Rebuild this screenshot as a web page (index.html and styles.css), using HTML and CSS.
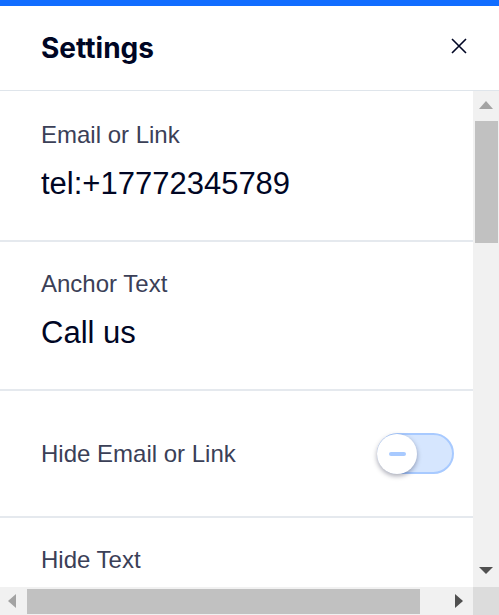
FILE: index.html
```html
<!DOCTYPE html>
<html lang="en">
<head>
  <meta charset="UTF-8" />
  <meta name="viewport" content="width=device-width, initial-scale=1" />
  <title>Settings</title>
  <link rel="stylesheet" href="styles.css">
</head>
<body>
  <div class="top-bar"></div>

  <header class="panel-header">
    <h1 class="panel-title">Settings</h1>
    <button class="close-btn" aria-label="Close">
      <svg width="16" height="16" viewBox="0 0 16 16" aria-hidden="true">
        <path d="M1 1 L15 15 M15 1 L1 15" stroke="#000624" stroke-width="1.6" fill="none" />
      </svg>
    </button>
  </header>

  <div class="panel-body">
    <div class="content">
      <section class="field">
        <div class="field-label">Email or Link</div>
        <div class="field-value">tel:+17772345789</div>
      </section>

      <section class="field">
        <div class="field-label">Anchor Text</div>
        <div class="field-value">Call us</div>
      </section>

      <section class="field field-toggle">
        <div class="field-label">Hide Email or Link</div>
        <span class="toggle" role="switch" aria-checked="false" aria-disabled="true">
          <span class="knob"><span class="knob-mark"></span></span>
        </span>
      </section>

      <section class="field">
        <div class="field-label">Hide Text</div>
      </section>
    </div>

    <div class="vscroll">
      <div class="sb-btn"><span class="arrow up off"></span></div>
      <div class="sb-track"><div class="vthumb"></div></div>
      <div class="sb-btn"><span class="arrow down"></span></div>
    </div>

    <div class="hscroll">
      <div class="sb-btn h"><span class="arrow left off"></span></div>
      <div class="sb-track h"><div class="hthumb"></div></div>
      <div class="sb-btn h"><span class="arrow right"></span></div>
    </div>

    <div class="sb-corner"></div>
  </div>
</body>
</html>
```

FILE: styles.css
```css
* { box-sizing: border-box; }
html, body {
  margin: 0;
  height: 100%;
}
body {
  font-family: 'Liberation Sans', Arial, sans-serif;
  background-color: #fff;
  color: #000624;
  display: flex;
  flex-direction: column;
  overflow: hidden;
}
.top-bar {
  height: 6px;
  background-color: #116dff;
  flex: none;
}
.panel-header {
  flex: none;
  height: 85px;
  display: flex;
  align-items: center;
  justify-content: space-between;
  padding: 0 32px 0 41px;
  border-bottom: 1px solid #dfe5eb;
}
.panel-title {
  margin: 0;
  font-family: 'Inter', sans-serif;
  font-weight: 700;
  font-size: 28px;
  color: #000624;
  letter-spacing: 0;
}
.close-btn {
  background: none;
  border: none;
  padding: 0;
  width: 16px;
  height: 16px;
  margin-top: -4px;
  cursor: pointer;
  display: flex;
}
.panel-body {
  flex: 1;
  min-height: 0;
  display: grid;
  grid-template-columns: 1fr 26px;
  grid-template-rows: 1fr 28px;
}
.content {
  overflow: hidden;
  padding-top: 2px;
}
.field {
  padding: 28px 19px 38px 41px;
  border-bottom: 2px solid #e5e9ee;
}
.field-label {
  font-size: 24px;
  line-height: 28px;
  color: #3b4057;
}
.field-value {
  margin-top: 17px;
  font-size: 31px;
  line-height: 36px;
  color: #000624;
}
.field-toggle {
  display: flex;
  align-items: center;
  justify-content: space-between;
  padding-top: 42px;
  padding-bottom: 42px;
}
.toggle {
  position: relative;
  width: 77px;
  height: 41px;
  border-radius: 21px;
  background-color: #d6e6fe;
  border: 2px solid #a8caff;
}
.knob {
  position: absolute;
  left: -2px;
  top: -1px;
  width: 40px;
  height: 40px;
  border-radius: 50%;
  background-color: #fff;
  box-shadow: 0 2px 5px rgba(0, 6, 36, 0.35);
  display: flex;
  align-items: center;
  justify-content: center;
}
.knob-mark {
  width: 17px;
  height: 4px;
  border-radius: 2px;
  background-color: #a8caff;
}

/* fake classic scrollbars */
.vscroll {
  background-color: #f1f1f1;
  display: flex;
  flex-direction: column;
}
.hscroll {
  background-color: #f1f1f1;
  display: flex;
}
.sb-corner {
  background-color: #dcdcdc;
}
.sb-btn {
  flex: none;
  height: 28px;
  display: flex;
  align-items: center;
  justify-content: center;
}
.sb-btn.h {
  height: auto;
  width: 27px;
}
.sb-track {
  flex: 1;
  padding: 2px 1px 0 2px;
}
.sb-track.h {
  padding: 2px 0 1px 0;
}
.vthumb {
  height: 122px;
  background-color: #c1c1c1;
}
.hthumb {
  width: 393px;
  height: 100%;
  background-color: #c1c1c1;
}
.arrow {
  width: 0;
  height: 0;
  border-style: solid;
  border-color: transparent;
}
.arrow.up {
  border-width: 0 7px 8px 7px;
  border-bottom-color: #505050;
}
.arrow.down {
  border-width: 7px 7px 0 7px;
  border-top-color: #505050;
  margin-top: -6px;
}
.arrow.left {
  border-width: 7px 8px 7px 0;
  border-right-color: #505050;
  margin-left: -3px;
}
.arrow.right {
  border-width: 7px 0 7px 8px;
  border-left-color: #505050;
  margin-left: -2px;
}
.arrow.up.off { border-bottom-color: #a3a3a3; }
.arrow.left.off { border-right-color: #a3a3a3; }
```
